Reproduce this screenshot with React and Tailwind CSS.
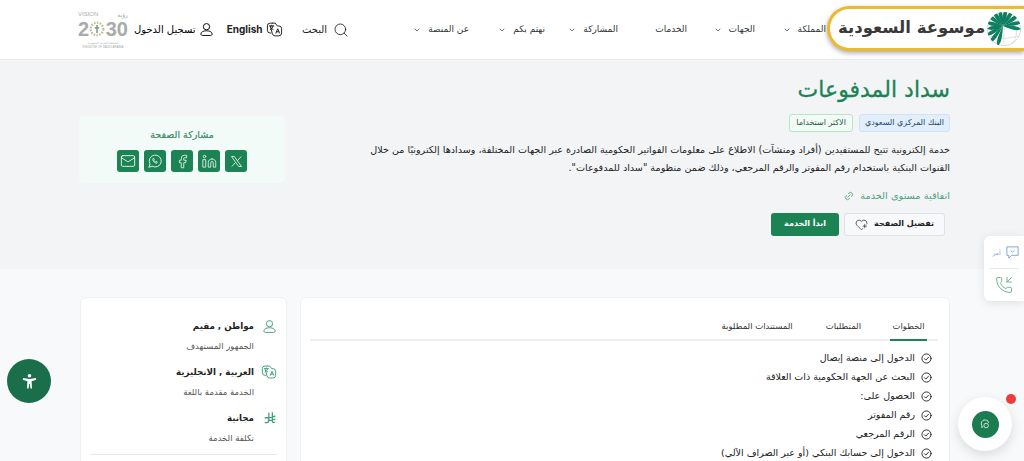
import { Search, ChevronDown, Link2, HeartPlus, Mail, Facebook, Linkedin, PhoneIncoming } from "lucide-react";

const font = "[font-family:'DejaVu_Sans','Noto_Sans',sans-serif]";

const Translate = ({ className }) => (
  <svg viewBox="0 0 24 24" fill="none" stroke="currentColor" strokeWidth="1.4" strokeLinecap="round" strokeLinejoin="round" className={className}>
    <path d="M9 3H6a4 4 0 0 0-4 4v6a4 4 0 0 0 4 4h1" />
    <path d="M9 3h4l3 4h2a4 4 0 0 1 4 4v6a4 4 0 0 1-4 4h-5a4 4 0 0 1-4-3L6 7" />
    <path d="M5 7h6M8 6v1M10 7c-.5 2-2 4-4 5M7 9.500c.7 1 1.600 2 3 2.500" />
    <path d="M14 17l2.500-6 2.500 6M15 15.200h3" />
  </svg>
);

const Person = ({ className }) => (
  <svg viewBox="0 0 24 24" fill="none" stroke="currentColor" strokeWidth="1.500" strokeLinejoin="round" className={className}>
    <circle cx="12" cy="7.500" r="5" />
    <path d="M3 19c0-3 4-5 9-5s9 2 9 5c0 1.500-1 2.500-2.500 2.500h-13C4 21.500 3 20.500 3 19z" />
  </svg>
);

const StepCheck = () => (
  <svg viewBox="0 0 24 24" fill="none" stroke="currentColor" strokeWidth="2" strokeLinecap="round" strokeLinejoin="round" className="h-[11px] w-[11px] shrink-0">
    <circle cx="12" cy="12" r="10" />
    <path d="M7.500 12.500l3 3 6-6.500" />
  </svg>
);

const XIcon = () => (
  <svg viewBox="0 0 24 24" fill="none" stroke="currentColor" strokeWidth="1.500" className="h-[15px] w-[15px]">
    <path d="M4 4h4.500L20 20h-4.500zM19.500 4l-6.500 7.200M10.500 13.500 4.500 20" />
  </svg>
);

const WhatsApp = () => (
  <svg viewBox="0 0 24 24" fill="none" stroke="currentColor" strokeWidth="1.500" strokeLinejoin="round" strokeLinecap="round" className="h-[16px] w-[16px]">
    <path d="M3 21l1.500-4.500A9 9 0 1 1 8 20z" />
    <path d="M9 8.500c-.8.800-.6 2.300.8 4s3.200 3 4.500 2.600c.7-.2 1.200-.8 1.200-1.500l-2-1-.9.800c-.9-.4-1.800-1.300-2.300-2.300l.7-.9-1-2z" />
  </svg>
);

const Riyal = () => (
  <svg viewBox="0 0 24 24" fill="none" stroke="currentColor" strokeWidth="2.200" className="h-[14px] w-[14px]">
    <path d="M10 3v14c0 2-1 3-3 3H3M16 2v17M3 12l18-3M8 17l13-3M16 20l5-1" />
  </svg>
);

// crown blades, angle and length, fanned over the top of the globe
const palmBlades = [
  [-100, 16], [-78, 17], [-55, 19], [-33, 18], [-12, 17], [10, 17], [32, 18],
  [55, 19], [78, 19], [100, 18], [195, 21], [218, 22], [240, 19],
];

const Palm = () => (
  <svg viewBox="0 0 36 36" className="h-[36px] w-[36px]">
    <defs>
      <clipPath id="palm-globe">
        <circle cx="18" cy="18" r="17" />
      </clipPath>
    </defs>
    <circle cx="18" cy="18" r="16.500" fill="#fff" stroke="#c9cfcc" strokeWidth="0.800" />
    <path d="M18 3v30M4 25c9 3 19 3 28 0M12 34c-3-6-3-12-1-18M26 33c4-5 5-10 4-15" fill="none" stroke="#cfd6d3" strokeWidth="0.700" />
    <g clipPath="url(#palm-globe)">
      <g transform="translate(17 15)">
        {palmBlades.map(([angle, len]) => (
          <path key={angle} transform={`rotate(${angle})`} d={`M0 0 C1.500 ${-len * 0.4} 3.500 ${-len * 0.75} 0 ${-len} C-3.500 ${-len * 0.75} -1.500 ${-len * 0.4} 0 0Z`} fill="#0f7f62" />
        ))}
      </g>
    </g>
  </svg>
);

const Vision = () => (
  <div dir="ltr" className="flex w-[50px] flex-col text-[#a9abaa] [font-family:'Liberation_Sans',sans-serif]">
    <div className="flex justify-between text-[6px] leading-[7px]">
      <span>VISION</span>
      <span className={font}>رؤية</span>
    </div>
    <div className="mt-[3px] flex items-center justify-between text-[20px] font-bold leading-[17px]">
      <span>2</span>
      <svg viewBox="0 0 14 14" className="h-[16px] w-[16px]">
        <circle cx="7" cy="7" r="5.500" fill="none" stroke="#c8c09a" strokeWidth="2" strokeDasharray="1.500 1" />
        <path d="M7 3.500v7M5 6h4" stroke="#7fa896" strokeWidth="1.500" />
      </svg>
      <span>30</span>
    </div>
    <div className={`mt-[4px] text-center text-[3px] leading-[3px] ${font}`}>المملكة العربية السعودية</div>
    <div className="mt-[1px] text-center text-[3px] leading-[3px]">KINGDOM OF SAUDI ARABIA</div>
  </div>
);

const navItems = [
  { label: "المملكة", width: "w-[71px]", menu: true },
  { label: "الجهات", width: "w-[68px]", menu: true },
  { label: "الخدمات", width: "w-[69px]", menu: false },
  { label: "المشاركة", width: "w-[73px]", menu: true },
  { label: "نهتم بكم", width: "w-[76px]", menu: true },
  { label: "عن المنصة", width: "w-[75px]", menu: true },
];

const shareButtons = [
  <XIcon key="x" />,
  <Linkedin key="in" className="h-[15px] w-[15px]" strokeWidth={1.500} />,
  <Facebook key="fb" className="h-[15px] w-[15px]" strokeWidth={1.500} />,
  <WhatsApp key="wa" />,
  <Mail key="mail" className="h-[16px] w-[16px]" strokeWidth={1.500} />,
];

const steps = [
  "الدخول إلى منصة إيصال",
  "البحث عن الجهة الحكومية ذات العلاقة",
  "الحصول على:",
  "رقم المفوتر",
  "الرقم المرجعي",
  "الدخول إلى حسابك البنكي (أو عبر الصراف الآلي)",
];

const facts = [
  { icon: <Person className="h-[15px] w-[15px]" />, title: "مواطن , مقيم", sub: "الجمهور المستهدف" },
  { icon: <Translate className="h-[16px] w-[16px]" />, title: "العربية , الانجليزية", sub: "الخدمة مقدمة باللغة" },
  { icon: <Riyal />, title: "مجانية", sub: "تكلفة الخدمة" },
];

const App = () => {
  return (
    <div dir="rtl" className={`relative h-[461px] w-[1024px] overflow-hidden bg-[#f8f9fb] text-[#1f2937] ${font}`}>
      <header className="flex h-[60px] items-center border-b border-[#e9eaec] bg-white pr-[198px] pl-[78px]">
        <nav className="flex flex-1 items-center">
          {navItems.map((item) => (
            <div key={item.label} className={`flex items-center gap-[7px] text-[9px] text-[#2f3437] ${item.width}`}>
              <span className="whitespace-nowrap">{item.label}</span>
              {item.menu && <ChevronDown className="h-[8px] w-[8px]" />}
            </div>
          ))}
          <div className="mr-[45px] flex items-center gap-[6px] text-[10px] text-[#222]">
            <Search className="h-[16px] w-[16px]" strokeWidth={1.300} />
            <span className="w-[25px] whitespace-nowrap">البحث</span>
          </div>
        </nav>
        <div className="flex items-center gap-[3px] text-[10px] font-bold text-[#222]">
          <Translate className="h-[17px] w-[17px]" />
          <span className="[font-family:'Inter',sans-serif]">English</span>
        </div>
        <div className="mr-[13px] flex items-center gap-[3px] text-[10px] text-black">
          <Person className="h-[15px] w-[15px]" />
          <span className="whitespace-nowrap">تسجيل الدخول</span>
        </div>
        <div className="mr-[6px]">
          <Vision />
        </div>
      </header>

      <section className="flex h-[209px] items-start justify-between bg-[#f3f4f6] pr-[74px] pl-[79px] pt-[14px]">
        <div className="w-[582px]">
          <h1 className="text-[22px] leading-[32px] text-[#1b8354] [-webkit-text-stroke:0.3px_#1b8354]">سداد المدفوعات</h1>
          <div className="mt-[8px] flex gap-[6px]">
            <span className="rounded-[3px] border border-[#cfe2f7] bg-[#e3eefb] px-[5px] py-[2px] text-[8px] leading-[12px] text-[#24466e]">البنك المركزي السعودي</span>
            <span className="rounded-[3px] border border-[#b5e6cc] bg-[#f2fbf6] px-[6px] py-[2px] text-[8px] leading-[12px] text-[#1f5a3e]">الاكثر استخداما</span>
          </div>
          <p className="mt-[9px] text-[9.600px] leading-[18px] text-[#222]">
            خدمة إلكترونية تتيح للمستفيدين (أفراد ومنشآت) الاطلاع على معلومات الفواتير الحكومية الصادرة عبر الجهات المختلفة، وسدادها إلكترونيًا من خلال القنوات البنكية باستخدام رقم المفوتر والرقم المرجعي، وذلك ضمن منظومة "سداد للمدفوعات".
          </p>
          <a className="mt-[12px] flex items-center gap-[6px] text-[9.800px] text-[#4fa37d]">
            اتفاقية مستوى الخدمة
            <Link2 className="h-[10px] w-[10px] -rotate-45" />
          </a>
          <div className="mt-[9px] flex gap-[5px] pr-[5px]">
            <button className="flex h-[23px] w-[101px] items-center justify-center gap-[6px] rounded-[3px] border border-[#dfe1e5] bg-[#f8f9fb] text-[8px] font-bold text-[#222]">
              تفضيل الصفحة
              <HeartPlus className="h-[13px] w-[13px]" strokeWidth={1.300} />
            </button>
            <button className="h-[23px] w-[68px] rounded-[3px] bg-[#1b8354] text-[8px] font-bold text-white">ابدأ الخدمة</button>
          </div>
        </div>
        <aside className="mt-[42px] flex h-[67px] w-[206px] shrink-0 flex-col items-center rounded-[5px] bg-[#f2fbf7] pt-[12px]">
          <div className="text-[9.500px] leading-[14px] text-[#3f8a6b] [-webkit-text-stroke:0.2px_#3f8a6b]">مشاركة الصفحة</div>
          <div className="mt-[8px] flex gap-[5px]">
            {shareButtons.map((icon) => (
              <div key={icon.key} className="flex h-[22px] w-[22px] items-center justify-center rounded-[3px] bg-[#1b8354] text-[#d8eee3]">
                {icon}
              </div>
            ))}
          </div>
        </aside>
      </section>

      <main className="flex gap-[13px] pt-[28px] pr-[74px] pl-[80px]">
        <div className="h-[300px] flex-1 rounded-[6px] border border-[#eef0f3] bg-white pt-[22px] pr-[11px] pl-[9px]">
          <div className="flex border-b-2 border-[#eceef2] pr-[11px] text-[8.500px] text-[#333]">
            <div className="-mb-[2px] w-[37px] border-b-2 border-[#1b8354] pb-[6px] text-center">الخطوات</div>
            <div className="mr-[29px] pb-[6px]">المتطلبات</div>
            <div className="mr-[33px] pb-[6px]">المستندات المطلوبة</div>
          </div>
          <ul className="mt-[8px] flex flex-col pr-[6px]">
            {steps.map((step) => (
              <li key={step} className="flex h-[19px] items-center gap-[6px] text-[9.500px] text-[#222]">
                <StepCheck />
                <span>{step}</span>
              </li>
            ))}
          </ul>
        </div>
        <div className="h-[300px] w-[207px] rounded-[6px] border border-[#eef0f3] bg-white px-[9px] pt-[20px]">
          <div className="flex flex-col">
            {facts.map((fact) => (
              <div key={fact.title} className="h-[46px]">
                <div className="flex items-center gap-[7px] text-[8.700px] font-bold leading-[16px] text-[#222]">
                  <span className="w-[16px] text-[#3f9e76]">{fact.icon}</span>
                  <span>{fact.title}</span>
                </div>
                <div className="mt-[6px] pr-[23px] text-[8.500px] leading-[12px] text-[#555]">{fact.sub}</div>
              </div>
            ))}
          </div>
          <div className="mt-[-2px] h-px bg-[#e6e9ee]" />
        </div>
      </main>

      <div className="absolute top-[6px] right-0 flex h-[45px] w-[197px] items-center justify-between rounded-l-[24px] border-y-[3px] border-l-[3px] border-[#efb92e] bg-white pr-[2px] pl-[8px] shadow-[0_2px_5px_rgba(0,0,0,0.35)]">
        <Palm />
        <span className="whitespace-nowrap text-[16.500px] font-bold text-[#3a3a3a]">موسوعة السعودية</span>
      </div>

      <div className="absolute top-[236px] right-0 flex h-[65px] w-[40px] flex-col items-center rounded-l-[6px] bg-white shadow-[0_2px_10px_rgba(0,0,0,0.1)]">
        <div className="flex h-[32px] items-center gap-[4px] pl-[4px] text-[#7ba3cf]">
          <svg viewBox="0 0 16 16" fill="none" stroke="currentColor" strokeWidth="1" className="h-[15px] w-[15px]"><path d="M2 2h12v9H7l-3 3v-3H2z" /><path d="M6 6l2 1.500L10 6" /></svg>
          <span className="text-[6px]">آمر</span>
        </div>
        <div className="h-px w-[30px] bg-[#e6e9ee]" />
        <div className="flex flex-1 items-center text-[#5fae8a]">
          <PhoneIncoming className="h-[18px] w-[18px]" strokeWidth={1.200} />
        </div>
      </div>

      <div className="absolute top-[397px] right-[12px] flex h-[54px] w-[54px] items-center justify-center rounded-full bg-white shadow-[0_4px_12px_rgba(0,0,0,0.12)]">
        <div className="flex h-[27px] w-[27px] items-center justify-center rounded-full bg-[#1b7c50] text-white">
          <svg viewBox="0 0 16 16" fill="none" stroke="currentColor" strokeWidth="1" className="h-[12px] w-[12px]"><path d="M8 2.500a5 5 0 0 0-4 8l-.5 2 2-.5" /><path d="M8 2.500a5 5 0 0 1 5 4" /><circle cx="9.500" cy="10" r="3" /></svg>
        </div>
      </div>
      <div className="absolute top-[394px] right-[8px] h-[10px] w-[10px] rounded-full bg-[#ef3b3b]" />

      <div className="absolute top-[359px] left-[7px] flex h-[44px] w-[44px] items-center justify-center rounded-full bg-[#1b6e4a] text-white">
        <svg viewBox="0 0 24 24" fill="currentColor" className="h-[17px] w-[17px]">
          <circle cx="12" cy="4" r="2.500" />
          <path d="M3 7 L12 8.500 L21 7 L21.500 9.500 L15 11.500 L15.500 22 L13.300 22 L12.500 15.500 L11.500 15.500 L10.700 22 L8.500 22 L9 11.500 L2.500 9.500Z" />
        </svg>
      </div>
    </div>
  );
};

export default App;
